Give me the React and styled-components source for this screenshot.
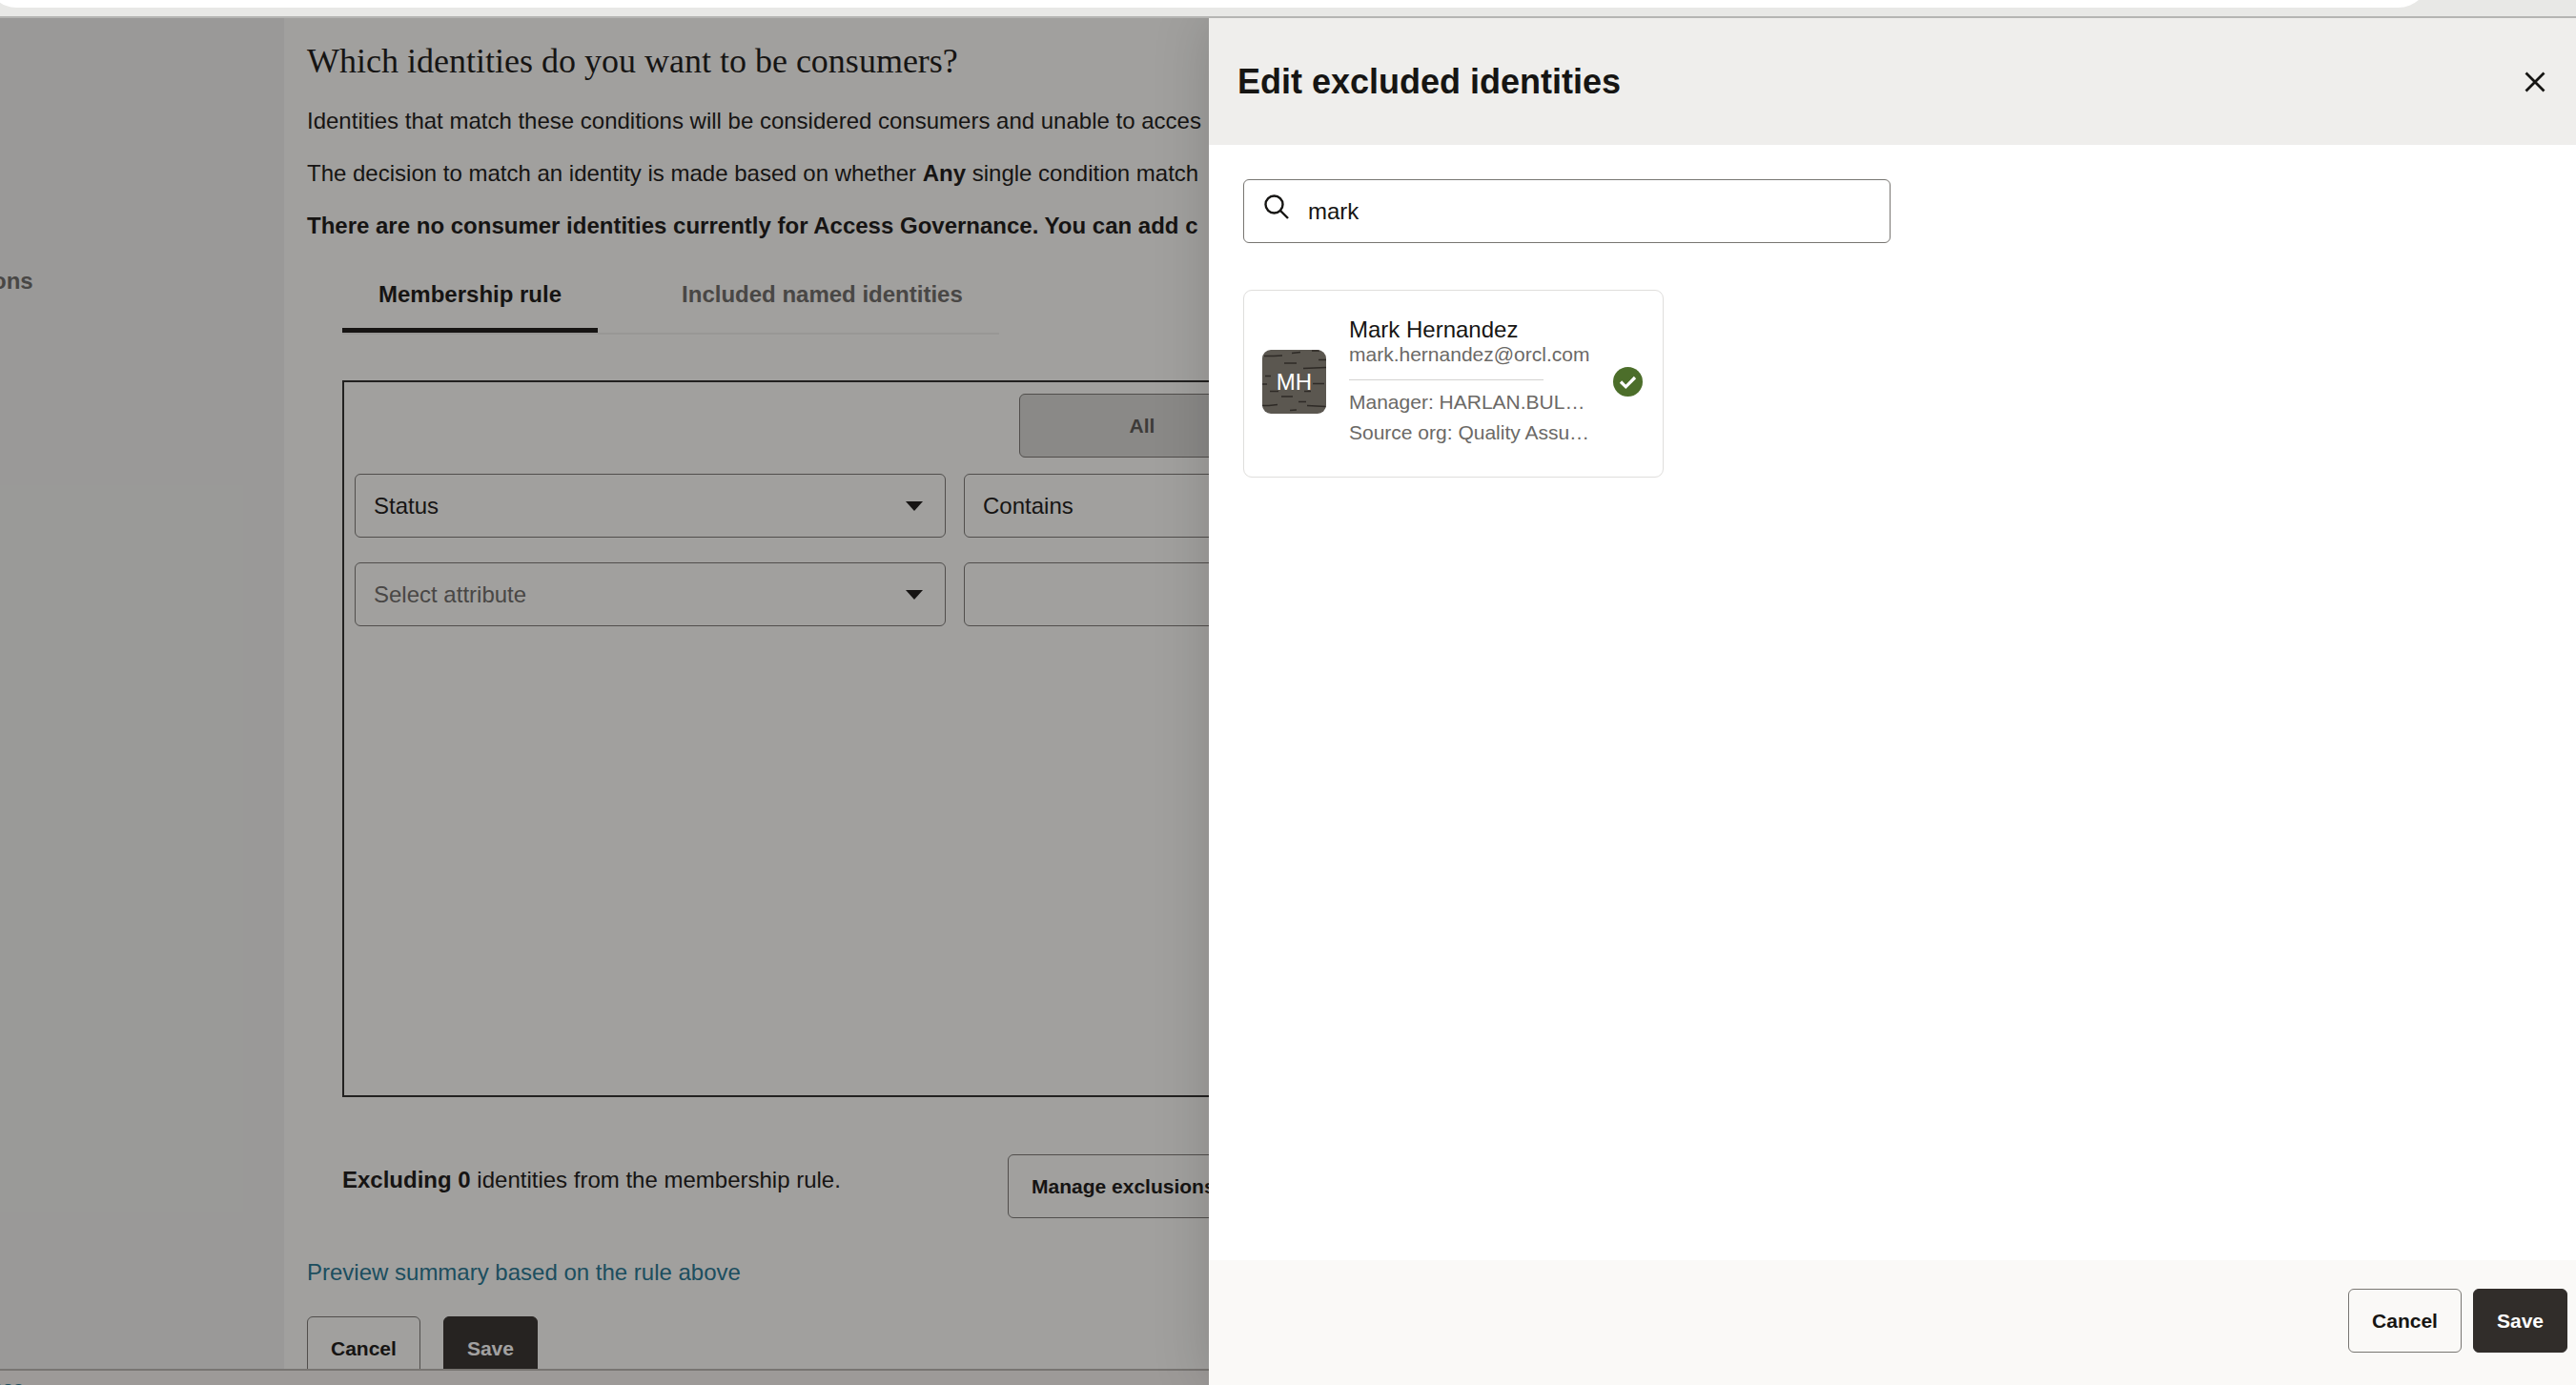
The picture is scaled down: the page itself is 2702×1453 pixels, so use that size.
import React, { useState } from "react";
import styled, { createGlobalStyle } from "styled-components";

const sans = `"Liberation Sans", Arial, sans-serif`;
const serif = `"Liberation Serif", Georgia, serif`;

const ink = "#161513";
const muted = "#6b6966";
const outline = "#787672";
const dark = "#312d2a";
const link = "#227591";

const GlobalStyle = createGlobalStyle`
  * { box-sizing: border-box; }
  body {
    margin: 0;
    font-family: ${sans};
    font-size: 24px;
    line-height: 31px;
    color: ${ink};
    background: #fff;
  }
  h1, h2, p { margin: 0; }
  button, input, select { font-family: inherit; margin: 0; }
`;

const Page = styled.div`
  position: relative;
  display: flex;
  flex-direction: column;
  height: 100vh;
  overflow: hidden;
`;

const BrowserBar = styled.header`
  display: flex;
  align-items: flex-end;
  flex: none;
  height: 19px;
  padding: 0 153px 9px 0;
  background: #e8e8e6;
  border-bottom: 2px solid #b5b5b3;
  overflow: hidden;
`;

const AddressPill = styled.div`
  flex: 1;
  height: 68px;
  margin-left: -16px;
  border-radius: 34px;
  background: #fff;
`;

const Stage = styled.div`
  position: relative;
  display: flex;
  flex-direction: column;
  flex: 1;
  min-height: 0;
  overflow: hidden;
`;

const Workspace = styled.div`
  display: flex;
  flex: 1;
  min-height: 0;
  overflow: hidden;
`;

const Sidebar = styled.nav`
  flex: 0 0 298px;
  padding-top: 260px;
  background: #f2f2f0;
`;

const SidebarLink = styled.a`
  display: block;
  margin-left: -8px;
  font-weight: 700;
  color: ${muted};
  text-decoration: none;
`;

const Main = styled.main`
  display: flex;
  flex-direction: column;
  flex: 1;
  min-width: 0;
  padding: 23px 24px 0;
  background: #fdfdfb;
`;

const PageTitle = styled.h1`
  margin-bottom: 25px;
  font-family: ${serif};
  font-size: 36px;
  font-weight: 400;
  line-height: 44px;
`;

const Intro = styled.div`
  display: flex;
  flex-direction: column;
  gap: 24px;
  white-space: nowrap;
`;

const Section = styled.section`
  display: flex;
  flex-direction: column;
  align-items: flex-start;
  max-width: 1973px;
  padding-left: 37px;
`;

const TabList = styled.div`
  display: flex;
  margin-top: 21px;
  border-bottom: 2px solid #eeeeeb;
`;

const Tab = styled.button`
  padding: 20px 38px;
  border: 0;
  border-bottom: 5px solid ${(p) => (p.$active ? ink : "transparent")};
  background: none;
  font-size: 24px;
  line-height: 31px;
  font-weight: 700;
  color: ${(p) => (p.$active ? ink : muted)};
`;

const TabSpacer = styled.div`
  width: 50px;
`;

const RuleBox = styled.div`
  display: flex;
  flex-direction: column;
  width: 100%;
  height: 752px;
  margin-top: 48px;
  padding: 12px 11px;
  border: 2px solid #2a2a28;
`;

const Segments = styled.div`
  display: flex;
  margin-bottom: 17px;
  padding-left: 697px;
`;

const Segment = styled.button`
  width: 258px;
  height: 67px;
  border: 1px solid ${outline};
  border-radius: 6px 0 0 6px;
  background: #d7d7d4;
  font-size: 21px;
  font-weight: 700;
  color: #585653;
`;

const RuleRow = styled.div`
  display: grid;
  grid-template-columns: repeat(3, minmax(0, 620px));
  gap: 19px;
  margin-bottom: 26px;
`;

const SelectWrap = styled.div`
  position: relative;
`;

const Select = styled.select`
  appearance: none;
  display: block;
  width: 100%;
  height: 67px;
  padding: 0 19px;
  border: 1px solid ${outline};
  border-radius: 6px;
  background: transparent;
  font-size: 24px;
  color: ${(p) => (p.$placeholder ? muted : ink)};
`;

const Arrow = styled.svg`
  position: absolute;
  right: 24px;
  top: 29px;
  width: 18px;
  height: 10px;
  pointer-events: none;
`;

const ExclusionRow = styled.div`
  display: flex;
  align-items: center;
  margin-top: 60px;
`;

const ExclusionText = styled.p`
  flex: 0 0 698px;
  padding-bottom: 14px;
`;

const Button = styled.button`
  height: 67px;
  padding: 0 24px;
  border: 1px solid ${(p) => (p.$primary ? dark : outline)};
  border-radius: 6px;
  background: ${(p) => (p.$primary ? dark : "transparent")};
  font-size: 21px;
  font-weight: 700;
  color: ${(p) => (p.$primary ? "#fff" : ink)};
`;

const PreviewLink = styled.a`
  align-self: flex-start;
  margin-top: 41px;
  color: ${link};
  text-decoration: none;
`;

const FormActions = styled.div`
  display: flex;
  gap: 24px;
  margin-top: 31px;
`;

const PageFooter = styled.footer`
  flex: none;
  height: 17px;
  padding-top: 4px;
  border-top: 2px solid #b9b6b1;
  background: #f7f4f0;
  overflow: hidden;
`;

const FooterLink = styled.a`
  display: block;
  margin-left: -8px;
  font-size: 21px;
  line-height: 27px;
  color: ${link};
  text-decoration: none;
`;

const Scrim = styled.div`
  position: absolute;
  inset: 0;
  background: rgba(22, 21, 19, 0.4);
`;

const Drawer = styled.aside`
  position: absolute;
  top: 0;
  right: 0;
  bottom: 0;
  display: flex;
  flex-direction: column;
  width: 1434px;
  background: #fff;
  box-shadow: 0 0 56px rgba(0, 0, 0, 0.16);
`;

const DrawerHeader = styled.div`
  display: flex;
  align-items: center;
  justify-content: space-between;
  height: 133px;
  padding: 0 31px 0 30px;
  background: #efeeec;
`;

const DrawerTitle = styled.h2`
  font-size: 36px;
  line-height: 44px;
`;

const CloseButton = styled.button`
  display: flex;
  padding: 0;
  border: 0;
  background: none;
`;

const DrawerBody = styled.div`
  display: flex;
  flex-direction: column;
  align-items: flex-start;
  flex: 1;
  gap: 49px;
  padding: 36px;
`;

const SearchBox = styled.label`
  display: flex;
  align-items: center;
  gap: 20px;
  width: 100%;
  max-width: 679px;
  height: 67px;
  padding-left: 21px;
  border: 1px solid ${outline};
  border-radius: 6px;
`;

const SearchIcon = styled.svg`
  flex: none;
  width: 26px;
  height: 36px;
  padding-bottom: 10px;
`;

const SearchInput = styled.input`
  flex: 1;
  min-width: 0;
  height: 100%;
  padding: 0;
  border: 0;
  outline: 0;
  background: transparent;
  font-size: 24px;
  color: ${ink};
`;

const PersonCard = styled.article`
  display: flex;
  align-items: center;
  height: 197px;
  width: 441px;
  padding: 0 19px 4px;
  border: 1px solid #dfdedc;
  border-radius: 9px;
`;

const Avatar = styled.div`
  position: relative;
  display: flex;
  align-items: center;
  justify-content: center;
  flex: none;
  width: 67px;
  height: 67px;
  border-radius: 9px;
  background: #5b5750;
  color: #fff;
  overflow: hidden;
`;

const AvatarPattern = styled.svg`
  position: absolute;
  inset: 0;
`;

const Initials = styled.span`
  position: relative;
`;

const PersonInfo = styled.div`
  flex: 0 0 250px;
  min-width: 0;
  margin: 0 27px 0 24px;
  white-space: nowrap;
`;

const PersonName = styled.p`
  line-height: 28px;
`;

const PersonEmail = styled.p`
  font-size: 21px;
  line-height: 24px;
  color: ${muted};
`;

const Divider = styled.hr`
  width: 204px;
  height: 1px;
  margin: 14px 0 7px;
  border: 0;
  background: #d4d3d1;
`;

const PersonDetail = styled.p`
  font-size: 21px;
  line-height: 32px;
  color: ${muted};
`;

const SelectedMark = styled.svg`
  flex: none;
  width: 31px;
  height: 31px;
`;

const DrawerFooter = styled.div`
  display: flex;
  justify-content: flex-end;
  gap: 12px;
  padding: 30px 9px 34px;
  background: #faf9f7;
`;

function AttributeSelect({ label, value, placeholder }) {
  return (
    <SelectWrap>
      <Select aria-label={label} $placeholder={placeholder} defaultValue={value}>
        <option value={value}>{value}</option>
      </Select>
      <Arrow viewBox="0 0 18 10" aria-hidden="true">
        <path d="M0 0h18L9 10z" fill={ink} />
      </Arrow>
    </SelectWrap>
  );
}

const bark = [
  "M2 6.500h10l9-.5", "M31 3.500l9-1", "M52 1h8", "M23 14h13", "M59 10.500h8",
  "M43 19.500l24-1", "M3 27.500h6", "M0 36h5", "M53 35.500h12", "M8 43.500h9",
  "M20 49h12", "M38 54.500h8", "M0 58.500h7l9-1", "M47 58.500l20 1",
  "M29 63.500l7-.5", "M44 43.500h7",
];

export default function App() {
  const [query, setQuery] = useState("mark");

  return (
    <>
      <GlobalStyle />
      <Page>
        <BrowserBar>
          <AddressPill />
        </BrowserBar>
        <Stage>
          <Workspace>
            <Sidebar>
              <SidebarLink href="#">ons</SidebarLink>
            </Sidebar>
            <Main>
              <PageTitle>Which identities do you want to be consumers?</PageTitle>
              <Intro>
                <p>Identities that match these conditions will be considered consumers and unable to acces</p>
                <p>
                  The decision to match an identity is made based on whether <b>Any</b> single condition match
                </p>
                <p>
                  <b>There are no consumer identities currently for Access Governance. You can add c</b>
                </p>
              </Intro>
              <Section>
                <TabList role="tablist">
                  <Tab role="tab" aria-selected="true" $active>Membership rule</Tab>
                  <TabSpacer />
                  <Tab role="tab" aria-selected="false">Included named identities</Tab>
                </TabList>
                <RuleBox>
                  <Segments>
                    <Segment aria-pressed="true">All</Segment>
                  </Segments>
                  <RuleRow>
                    <AttributeSelect label="Attribute" value="Status" />
                    <AttributeSelect label="Operator" value="Contains" />
                  </RuleRow>
                  <RuleRow>
                    <AttributeSelect label="Attribute" value="Select attribute" placeholder />
                    <AttributeSelect label="Operator" value="" />
                  </RuleRow>
                </RuleBox>
                <ExclusionRow>
                  <ExclusionText>
                    <b>Excluding 0</b> identities from the membership rule.
                  </ExclusionText>
                  <Button>Manage exclusions</Button>
                </ExclusionRow>
              </Section>
              <PreviewLink href="#">Preview summary based on the rule above</PreviewLink>
              <FormActions>
                <Button>Cancel</Button>
                <Button $primary>Save</Button>
              </FormActions>
            </Main>
          </Workspace>
          <PageFooter>
            <FooterLink href="#">ces</FooterLink>
          </PageFooter>
          <Scrim />
          <Drawer role="dialog" aria-labelledby="drawer-title">
            <DrawerHeader>
              <DrawerTitle id="drawer-title">Edit excluded identities</DrawerTitle>
              <CloseButton aria-label="Close">
                <svg width="24" height="24" viewBox="0 0 24 24" fill="none" stroke={ink} strokeWidth="2.8" aria-hidden="true">
                  <path d="M2.500 2.500l19 19M21.500 2.500l-19 19" />
                </svg>
              </CloseButton>
            </DrawerHeader>
            <DrawerBody>
              <SearchBox>
                <SearchIcon viewBox="0 0 26 26" fill="none" stroke={ink} strokeWidth="2.4" aria-hidden="true">
                  <circle cx="10.500" cy="10.500" r="9" />
                  <path d="M17 17l8 8" />
                </SearchIcon>
                <SearchInput
                  type="text"
                  aria-label="Search identities"
                  value={query}
                  onChange={(e) => setQuery(e.target.value)}
                />
              </SearchBox>
              <PersonCard>
                <Avatar>
                  <AvatarPattern viewBox="0 0 67 67" fill="none" stroke="#2e2a26" strokeWidth="1.7" aria-hidden="true">
                    {bark.map((d) => (
                      <path key={d} d={d} />
                    ))}
                  </AvatarPattern>
                  <Initials>MH</Initials>
                </Avatar>
                <PersonInfo>
                  <PersonName>Mark Hernandez</PersonName>
                  <PersonEmail>mark.hernandez@orcl.com</PersonEmail>
                  <Divider />
                  <PersonDetail>Manager: HARLAN.BUL…</PersonDetail>
                  <PersonDetail>Source org: Quality Assu…</PersonDetail>
                </PersonInfo>
                <SelectedMark viewBox="0 0 31 31" fill="none" role="img" aria-label="Selected">
                  <circle cx="15.500" cy="15.500" r="15.500" fill="#4c6e2a" />
                  <path d="M8 15.500l5.300 5.300L23 11" stroke="#fff" strokeWidth="3.2" />
                </SelectedMark>
              </PersonCard>
            </DrawerBody>
            <DrawerFooter>
              <Button>Cancel</Button>
              <Button $primary>Save</Button>
            </DrawerFooter>
          </Drawer>
        </Stage>
      </Page>
    </>
  );
}
